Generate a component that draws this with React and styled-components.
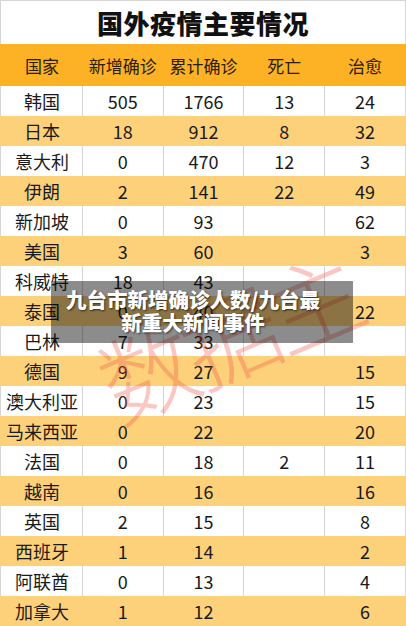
import React from 'react';
import styled, { createGlobalStyle } from 'styled-components';

const GlobalStyle = createGlobalStyle`
    html, body {
        margin: 0;
        padding: 0;
        background: #ffffff;
    }
    body {
        font-family: "Noto Sans CJK SC", "Noto Sans", sans-serif;
    }
`;

const Page = styled.div`
    position: relative;
    width: 406px;
    height: 626px;
    overflow: hidden;
    background: #ffffff;
`;

const Title = styled.div`
    height: 44px;
    display: flex;
    align-items: center;
    justify-content: center;
    border: 1px solid #d6d6d6;
    border-bottom: none;
    box-sizing: border-box;
    font-size: 26px;
    font-weight: 900;
    color: #111111;
    letter-spacing: 0.5px;
`;

const Row = styled.div`
    display: grid;
    grid-template-columns: repeat(5, 1fr);
    height: ${props => props.header ? '42px' : '30px'};
    background: ${props => props.header ? '#fdb124' : props.striped ? '#fdd17a' : '#ffffff'};
    border-left: 1px solid ${props => props.header || props.striped ? 'transparent' : '#d6d6d6'};
    border-right: 1px solid ${props => props.header || props.striped ? 'transparent' : '#d6d6d6'};
    box-sizing: border-box;
`;

const Cell = styled.div`
    display: flex;
    align-items: center;
    justify-content: center;
    font-size: ${props => props.header ? '17px' : '18px'};
    color: ${props => props.header ? '#2a1d05' : '#1a1a1a'};
    border-left: 1px solid ${props => props.divider ? '#d6d6d6' : 'transparent'};
    white-space: nowrap;
`;

const Watermark = styled.div`
    position: absolute;
    left: 92px;
    top: 287px;
    font-size: 96px;
    line-height: 1;
    font-weight: 300;
    color: rgba(238, 80, 68, 0.32);
    transform: rotate(-23deg);
    transform-origin: center;
    letter-spacing: -6px;
    pointer-events: none;
    white-space: nowrap;
`;

const Overlay = styled.div`
    position: absolute;
    left: 51px;
    top: 281px;
    width: 302px;
    height: 62px;
    background: rgba(0, 0, 0, 0.45);
    display: flex;
    flex-direction: column;
    align-items: center;
    justify-content: center;
    padding-right: 18px;
    padding-bottom: 2px;
    box-sizing: border-box;
`;

const OverlayLine = styled.div`
    color: #ffffff;
    font-size: 20.5px;
    font-weight: 900;
    line-height: 23px;
    text-shadow: 1px 1px 2px rgba(0, 0, 0, 0.6);
    white-space: nowrap;
`;

const headers = ['国家', '新增确诊', '累计确诊', '死亡', '治愈'];

const rows = [
    ['韩国', '505', '1766', '13', '24'],
    ['日本', '18', '912', '8', '32'],
    ['意大利', '0', '470', '12', '3'],
    ['伊朗', '2', '141', '22', '49'],
    ['新加坡', '0', '93', '', '62'],
    ['美国', '3', '60', '', '3'],
    ['科威特', '18', '43', '', ''],
    ['泰国', '0', '40', '', '22'],
    ['巴林', '7', '33', '', ''],
    ['德国', '9', '27', '', '15'],
    ['澳大利亚', '0', '23', '', '15'],
    ['马来西亚', '0', '22', '', '20'],
    ['法国', '0', '18', '2', '11'],
    ['越南', '0', '16', '', '16'],
    ['英国', '2', '15', '', '8'],
    ['西班牙', '1', '14', '', '2'],
    ['阿联酋', '0', '13', '', '4'],
    ['加拿大', '1', '12', '', '6'],
];

export default function App() {
    return (
        <Page>
            <GlobalStyle />
            <Title>国外疫情主要情况</Title>
            <Row header>
                { headers.map(h => <Cell header key={ h }>{ h }</Cell>) }
            </Row>
            { rows.map((row, i) => {
                const striped = i % 2 === 1;
                return (
                    <Row key={ row[0] } striped={ striped }>
                        { row.map((value, j) =>
                            <Cell key={ j } divider={ !striped && j > 0 }>{ value }</Cell>) }
                    </Row>
                );
            }) }
            <Watermark>数据主</Watermark>
            <Overlay>
                <OverlayLine>九台市新增确诊人数/九台最</OverlayLine>
                <OverlayLine>新重大新闻事件</OverlayLine>
            </Overlay>
        </Page>
    );
}
